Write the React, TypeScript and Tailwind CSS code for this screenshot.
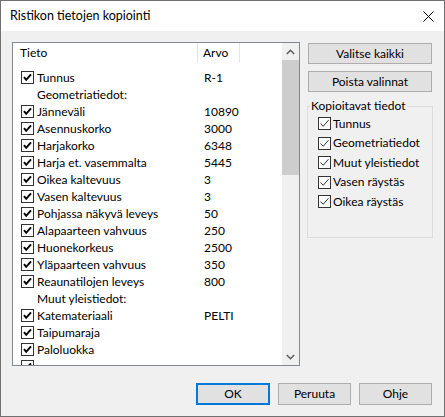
import React from "react";

type Row = { label: string; value?: string; heading?: boolean };

const rows: Row[] = [
  { label: "Tunnus", value: "R-1" },
  { label: "Geometriatiedot:", heading: true },
  { label: "Jänneväli", value: "10890" },
  { label: "Asennuskorko", value: "3000" },
  { label: "Harjakorko", value: "6348" },
  { label: "Harja et. vasemmalta", value: "5445" },
  { label: "Oikea kaltevuus", value: "3" },
  { label: "Vasen kaltevuus", value: "3" },
  { label: "Pohjassa näkyvä leveys", value: "50" },
  { label: "Alapaarteen vahvuus", value: "250" },
  { label: "Huonekorkeus", value: "2500" },
  { label: "Yläpaarteen vahvuus", value: "350" },
  { label: "Reaunatilojen leveys", value: "800" },
  { label: "Muut yleistiedot:", heading: true },
  { label: "Katemateriaali", value: "PELTI" },
  { label: "Taipumaraja" },
  { label: "Paloluokka" },
];

const groupItems = ["Tunnus", "Geometriatiedot", "Muut yleistiedot", "Vasen räystäs", "Oikea räystäs"];

function ListCheck() {
  return (
    <svg width="13" height="13" viewBox="0 0 13 13" className="shrink-0">
      <rect x="0.5" y="0.5" width="12" height="12" fill="#fff" stroke="#333" />
      <path d="M3 6.2 L5.2 8.8 L10 3.4" fill="none" stroke="#000" strokeWidth="2" />
    </svg>
  );
}

function ThinCheck() {
  return (
    <svg width="13" height="13" viewBox="0 0 13 13" className="shrink-0">
      <rect x="0.5" y="0.5" width="12" height="12" fill="#fff" stroke="#333" />
      <path d="M2.5 6.5 L5.2 9.3 L10.5 3.2" fill="none" stroke="#333" strokeWidth="1" />
    </svg>
  );
}

function Button({ label, primary }: { label: string; primary?: boolean }) {
  return (
    <button
      className={
        primary
          ? "w-[74px] h-[22px] bg-[#e1e1e1] border-2 border-[#0078d7] text-[12px] text-black"
          : "w-[73px] h-[22px] bg-[#e1e1e1] border border-[#adadad] text-[12px] text-black"
      }
    >
      {label}
    </button>
  );
}

export default function App() {
  return (
    <div
      className="w-[445px] h-[417px] border border-[#707070] flex flex-col bg-[#f0f0f0] text-black overflow-hidden"
      style={{ fontFamily: '"Segoe UI", Lato, "Noto Sans", sans-serif' }}
    >
      {/* title bar */}
      <div className="h-[30px] bg-white flex items-center justify-between pl-[9px] pr-[10px]">
        <span className="text-[12.5px]">Ristikon tietojen kopiointi</span>
        <svg width="11" height="11" viewBox="0 0 11 11">
          <path d="M0.5 0.5 L10.5 10.5 M10.5 0.5 L0.5 10.5" stroke="#000" strokeWidth="1" />
        </svg>
      </div>

      <div className="flex-1 flex flex-col pt-[11px] pl-[11px] pr-[12px]">
        <div className="flex">
          {/* list view */}
          <div className="w-[288px] h-[324px] bg-white border border-[#828790] flex overflow-hidden">
            <div className="flex-1 flex flex-col text-[12px]">
              <div className="h-[20px] flex items-center shrink-0">
                <div className="w-[185px] h-full pl-[7px] flex items-center border-r border-[#e5e5e5]">Tieto</div>
                <div className="w-[42px] h-full pl-[5px] flex items-center border-r border-[#e5e5e5]">Arvo</div>
              </div>
              <div className="pt-[6px] flex flex-col">
                {rows.map((r) => (
                  <div key={r.label} className="h-[17px] flex items-center shrink-0">
                    <div className="w-[185px] flex items-center pl-[8px] gap-[3px]">
                      {r.heading ? <span className="w-[13px]" /> : <ListCheck />}
                      <span className="leading-none whitespace-nowrap">{r.label}</span>
                    </div>
                    <div className="pl-[6px] leading-none">{r.value}</div>
                  </div>
                ))}
                {/* partially visible next row */}
                <div className="h-[17px] flex items-center shrink-0 pl-[8px]">
                  <ListCheck />
                </div>
              </div>
            </div>
            {/* scrollbar */}
            <div className="w-[17px] bg-[#f0f0f0] flex flex-col shrink-0">
              <div className="h-[17px] flex items-center justify-center">
                <svg width="9" height="6" viewBox="0 0 9 6">
                  <path d="M0.8 5 L4.5 1.3 L8.2 5" fill="none" stroke="#606060" strokeWidth="1.6" />
                </svg>
              </div>
              <div className="h-[115px] bg-[#cdcdcd]" />
              <div className="flex-1" />
              <div className="h-[17px] flex items-center justify-center">
                <svg width="9" height="6" viewBox="0 0 9 6">
                  <path d="M0.8 1 L4.5 4.7 L8.2 1" fill="none" stroke="#606060" strokeWidth="1.6" />
                </svg>
              </div>
            </div>
          </div>

          {/* right column */}
          <div className="ml-[8px] w-[124px] flex flex-col">
            <button className="h-[21px] mt-[1px] bg-[#e1e1e1] border border-[#adadad] text-[12px]">Valitse kaikki</button>
            <button className="h-[21px] mt-[7px] bg-[#e1e1e1] border border-[#adadad] text-[12px]">Poista valinnat</button>
            <div className="mt-[14px] mx-[-1px] h-[132px] border border-[#dcdcdc] relative">
              <span className="absolute left-[2px] top-[-9px] px-[1px] bg-[#f0f0f0] text-[12px] leading-[16px]">
                Kopioitavat tiedot
              </span>
              <div className="pt-[7px] pl-[10px] flex flex-col">
                {groupItems.map((g) => (
                  <div key={g} className="h-[19.5px] flex items-center gap-[2px] text-[12px]">
                    <ThinCheck />
                    <span className="leading-none">{g}</span>
                  </div>
                ))}
              </div>
            </div>
          </div>
        </div>

        <div className="mt-[17px] flex justify-end gap-[8px]">
          <Button label="OK" primary />
          <Button label="Peruuta" />
          <Button label="Ohje" />
        </div>
      </div>
    </div>
  );
}
